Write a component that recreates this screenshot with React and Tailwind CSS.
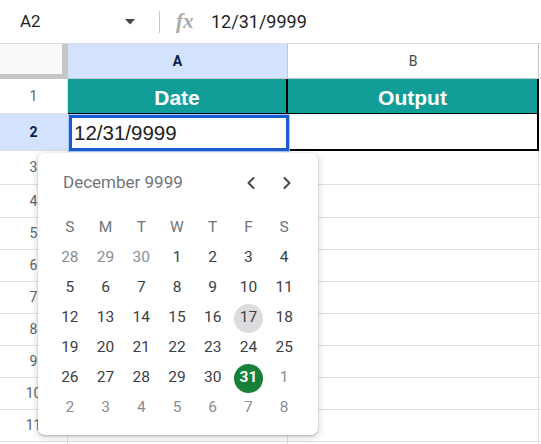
import React from "react";
import { ChevronLeft, ChevronRight } from "lucide-react";

const lowerRows = [
  { n: 3, h: "h-[34px]" },
  { n: 4, h: "h-[33px]" },
  { n: 5, h: "h-[32px]" },
  { n: 6, h: "h-[32px]" },
  { n: 7, h: "h-[32px]" },
  { n: 8, h: "h-[32px]" },
  { n: 9, h: "h-[32px]" },
  { n: 10, h: "h-[32px]" },
  { n: 11, h: "h-[32px]" },
];

const weeks = [
  [[28, "g"], [29, "g"], [30, "g"], [1], [2], [3], [4]],
  [[5], [6], [7], [8], [9], [10], [11]],
  [[12], [13], [14], [15], [16], [17, "h"], [18]],
  [[19], [20], [21], [22], [23], [24], [25]],
  [[26], [27], [28], [29], [30], [31, "s"], [1, "g"]],
  [[2, "g"], [3, "g"], [4, "g"], [5, "g"], [6, "g"], [7, "g"], [8, "g"]],
];

function DayCell({ d, t }) {
  let inner;
  if (t === "s") {
    inner = (
      <div className="w-[29px] h-[29px] rounded-full bg-[#188038] text-white font-bold flex items-center justify-center">
        {d}
      </div>
    );
  } else if (t === "h") {
    inner = (
      <div className="w-[29px] h-[29px] rounded-full bg-[#dcdcdf] text-[#3c4043] flex items-center justify-center">
        {d}
      </div>
    );
  } else {
    inner = <span className={t === "g" ? "text-[#8a8d91]" : "text-[#3c4043]"}>{d}</span>;
  }
  return <div className="h-[30px] flex items-center justify-center">{inner}</div>;
}

export default function App() {
  return (
    <div className="relative w-[541px] h-[444px] overflow-hidden bg-white font-['Roboto',sans-serif]">
      {/* Formula bar */}
      <div className="flex items-center h-[44px] border-b border-[#d6d9de]">
        <div className="w-[110px] pl-[20px] text-[17px] text-[#1f1f1f]">A2</div>
        <div className="w-[40px] flex justify-center">
          <svg width="10" height="6" viewBox="0 0 10 6">
            <path d="M0 0 L10 0 L5 5.5 Z" fill="#444746" />
          </svg>
        </div>
        <div className="w-px h-[22px] bg-[#c7c7c7] ml-[9px]" />
        <div className="ml-[16px] w-[22px] text-[21px] italic font-bold text-[#a6a9ad] font-['Liberation_Serif',serif] leading-none">
          fx
        </div>
        <div className="ml-[13px] text-[18px] text-[#1f1f1f]">12/31/9999</div>
      </div>

      {/* Column header row */}
      <div className="flex h-[35px]">
        <div className="w-[68px] bg-[#f8f9fa] border-r-[6px] border-b-[5px] border-[#c4c7c5]" />
        <div className="w-[220px] bg-[#d3e3fd] border-r border-b border-[#c4c7c5] flex items-center justify-center text-[14px] font-bold text-[#041e49]">
          A
        </div>
        <div className="w-[251px] bg-white border-r border-b border-[#c4c7c5] flex items-center justify-center text-[14px] text-[#444746]">
          B
        </div>
        <div className="flex-1 border-b border-[#c4c7c5]" />
      </div>

      {/* Row 1 */}
      <div className="flex h-[35px]">
        <div className="w-[68px] border-r border-b border-[#e1e1e1] flex items-center justify-center text-[14px] text-[#5f6368]">
          1
        </div>
        <div className="w-[220px] bg-[#119e98] border-r-2 border-b border-black flex items-center justify-center pt-[3px] text-[21px] font-bold text-white font-['Liberation_Sans',sans-serif]">
          Date
        </div>
        <div className="w-[251px] bg-[#119e98] border-r-2 border-b border-black flex items-center justify-center pt-[3px] text-[21px] font-bold text-white font-['Liberation_Sans',sans-serif]">
          Output
        </div>
        <div className="flex-1 border-b border-[#e1e1e1]" />
      </div>

      {/* Row 2 */}
      <div className="flex h-[37px]">
        <div className="w-[68px] bg-[#d3e3fd] border-r border-b border-[#e1e1e1] flex items-center justify-center text-[14px] font-bold text-[#041e49]">
          2
        </div>
        <div className="relative w-[220px] border-b border-[#e1e1e1] flex items-center pl-[6px] pt-[2px] text-[20.5px] text-[#222] font-['Liberation_Sans',sans-serif]">
          12/31/9999
          <div className="absolute left-[1px] top-[1px] right-[-1px] bottom-[-1px] border-[3px] border-[#1a5bd0] shadow-[0_0_0_1px_#a8c7fa]" />
        </div>
        <div className="w-[251px] border-r-2 border-b-2 border-black" />
        <div className="flex-1 border-b border-[#e1e1e1]" />
      </div>

      {/* Lower rows */}
      {lowerRows.map((r) => (
        <div key={r.n} className={`flex ${r.h}`}>
          <div className="w-[68px] border-r border-b border-[#e1e1e1] flex items-center justify-center text-[14px] text-[#5f6368]">
            {r.n}
          </div>
          <div className="w-[220px] border-r border-b border-[#e1e1e1]" />
          <div className="w-[251px] border-r border-b border-[#e1e1e1]" />
          <div className="flex-1 border-b border-[#e1e1e1]" />
        </div>
      ))}
      <div className="flex h-[32px]">
        <div className="w-[68px] border-r border-[#e1e1e1]" />
        <div className="w-[220px] border-r border-[#e1e1e1]" />
        <div className="w-[251px] border-r border-[#e1e1e1]" />
      </div>

      {/* Date picker popup */}
      <div className="absolute left-[38px] top-[153px] w-[280px] h-[282px] bg-white rounded-[7px] shadow-[0_1px_2px_0_rgba(60,64,67,0.3),0_2px_6px_2px_rgba(60,64,67,0.15)]">
        <div className="h-[60px] flex items-center justify-between pl-[25px] pr-[21px]">
          <span className="text-[17px] text-[#70757a]">December 9999</span>
          <div className="flex items-center gap-[16px] text-[#444746]">
            <div className="w-[20px] flex justify-center">
              <ChevronLeft size={20} strokeWidth={2.4} />
            </div>
            <div className="w-[20px] flex justify-center">
              <ChevronRight size={20} strokeWidth={2.4} />
            </div>
          </div>
        </div>
        <div className="ml-[14px] w-[250px] grid grid-cols-7 text-[15.5px]">
          {["S", "M", "T", "W", "T", "F", "S"].map((w, i) => (
            <div key={i} className="h-[30px] flex items-center justify-center text-[#70757a]">
              {w}
            </div>
          ))}
          {weeks.flat().map(([d, t], i) => (
            <DayCell key={i} d={d} t={t} />
          ))}
        </div>
      </div>
    </div>
  );
}
